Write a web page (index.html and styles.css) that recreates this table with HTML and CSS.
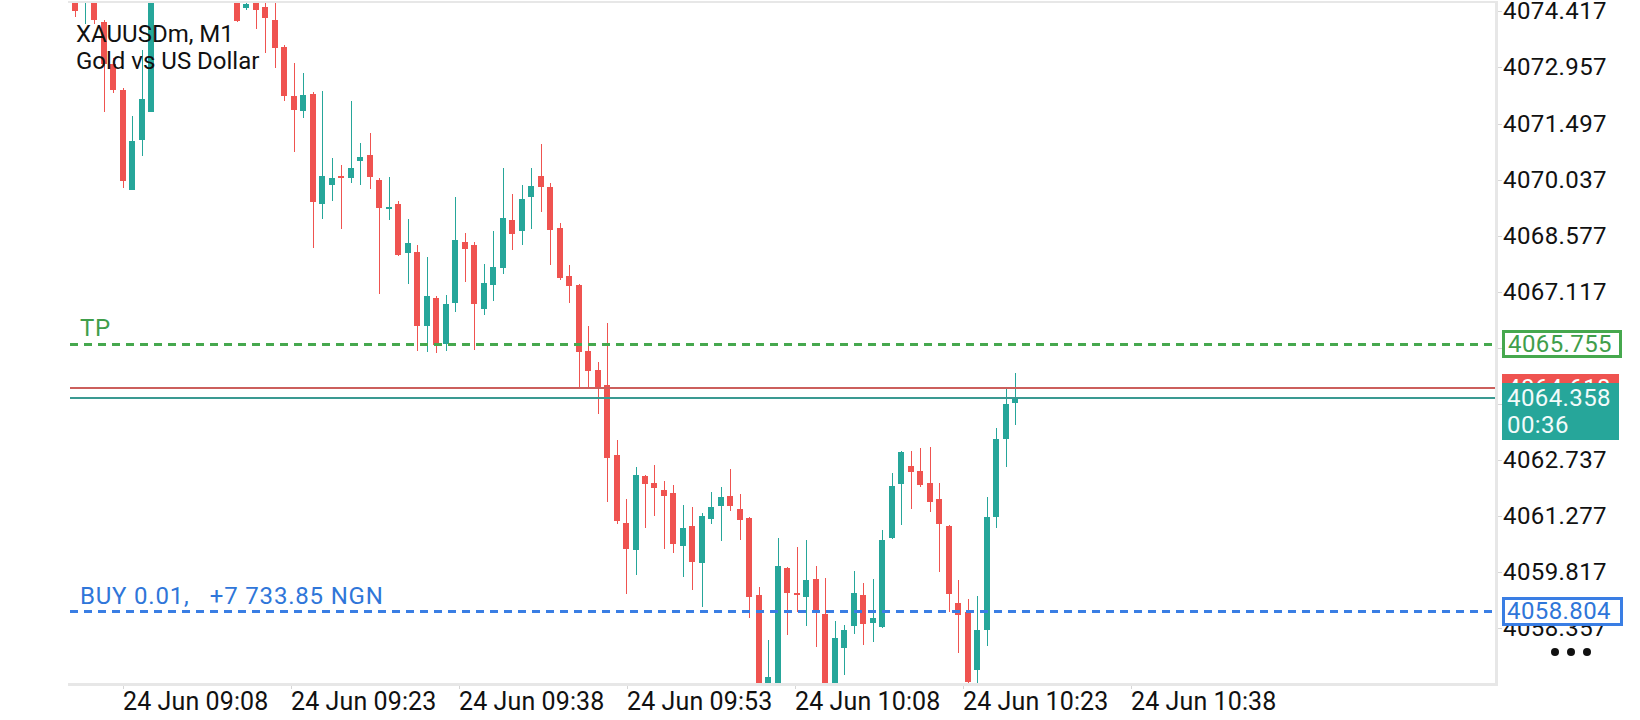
FILE: index.html
```html
<!DOCTYPE html>
<html lang="en">
<head>
<meta charset="utf-8">
<title>XAUUSDm, M1</title>
<link rel="stylesheet" href="styles.css">
</head>
<body>
<div class="terminal">
  <div class="gutter"></div>

  <div class="plot">
    <svg class="chart" viewBox="68 3 1427 680" width="1427" height="680" xmlns="http://www.w3.org/2000/svg">
      <g class="candles">
        <rect class="d" x="75" y="-10" width="1" height="27"/><rect class="d" x="72" y="-10" width="6" height="21"/>
        <rect class="u" x="85" y="-30" width="1" height="54"/><rect class="u" x="82" y="-30" width="6" height="25"/>
        <rect class="d" x="94" y="-10" width="1" height="34"/><rect class="d" x="91" y="-10" width="6" height="30"/>
        <rect class="d" x="104" y="20" width="1" height="92"/><rect class="d" x="101" y="22" width="6" height="42"/>
        <rect class="d" x="113" y="58" width="1" height="35"/><rect class="d" x="110" y="64" width="6" height="26"/>
        <rect class="d" x="123" y="88" width="1" height="100"/><rect class="d" x="120" y="90" width="6" height="91"/>
        <rect class="u" x="132" y="116" width="1" height="74"/><rect class="u" x="129" y="141" width="6" height="49"/>
        <rect class="u" x="142" y="50" width="1" height="106"/><rect class="u" x="139" y="99" width="6" height="41"/>
        <rect class="u" x="151" y="-20" width="1" height="132"/><rect class="u" x="148" y="-20" width="6" height="132"/>
        <rect class="d" x="237" y="-10" width="1" height="32"/><rect class="d" x="234" y="-10" width="6" height="31"/>
        <rect class="u" x="246" y="-5" width="1" height="15"/><rect class="u" x="243" y="4" width="6" height="4"/>
        <rect class="d" x="256" y="-10" width="1" height="39"/><rect class="d" x="253" y="-10" width="6" height="20"/>
        <rect class="d" x="265" y="-5" width="1" height="58"/><rect class="d" x="262" y="7" width="6" height="11"/>
        <rect class="d" x="275" y="2" width="1" height="66"/><rect class="d" x="272" y="20" width="6" height="28"/>
        <rect class="d" x="284" y="45" width="1" height="56"/><rect class="d" x="281" y="47" width="6" height="49"/>
        <rect class="d" x="294" y="63" width="1" height="89"/><rect class="d" x="291" y="96" width="6" height="14"/>
        <rect class="u" x="303" y="73" width="1" height="45"/><rect class="u" x="300" y="95" width="6" height="16"/>
        <rect class="d" x="313" y="92" width="1" height="156"/><rect class="d" x="310" y="94" width="6" height="108"/>
        <rect class="u" x="322" y="91" width="1" height="128"/><rect class="u" x="319" y="176" width="6" height="28"/>
        <rect class="u" x="332" y="158" width="1" height="43"/><rect class="u" x="329" y="178" width="6" height="7"/>
        <rect class="d" x="341" y="165" width="1" height="64"/><rect class="d" x="338" y="176" width="6" height="2"/>
        <rect class="u" x="351" y="101" width="1" height="82"/><rect class="u" x="348" y="168" width="6" height="10"/>
        <rect class="u" x="360" y="143" width="1" height="42"/><rect class="u" x="357" y="157" width="6" height="4"/>
        <rect class="d" x="370" y="133" width="1" height="56"/><rect class="d" x="367" y="155" width="6" height="22"/>
        <rect class="d" x="379" y="178" width="1" height="116"/><rect class="d" x="376" y="180" width="6" height="28"/>
        <rect class="u" x="389" y="177" width="1" height="43"/><rect class="u" x="386" y="207" width="6" height="2"/>
        <rect class="d" x="398" y="201" width="1" height="55"/><rect class="d" x="395" y="204" width="6" height="51"/>
        <rect class="u" x="408" y="219" width="1" height="65"/><rect class="u" x="405" y="243" width="6" height="10"/>
        <rect class="d" x="417" y="245" width="1" height="106"/><rect class="d" x="414" y="252" width="6" height="74"/>
        <rect class="u" x="427" y="257" width="1" height="95"/><rect class="u" x="424" y="296" width="6" height="30"/>
        <rect class="d" x="436" y="296" width="1" height="57"/><rect class="d" x="433" y="298" width="6" height="47"/>
        <rect class="u" x="446" y="295" width="1" height="56"/><rect class="u" x="443" y="304" width="6" height="40"/>
        <rect class="u" x="455" y="197" width="1" height="115"/><rect class="u" x="452" y="240" width="6" height="63"/>
        <rect class="d" x="465" y="233" width="1" height="49"/><rect class="d" x="462" y="242" width="6" height="7"/>
        <rect class="d" x="474" y="242" width="1" height="108"/><rect class="d" x="471" y="245" width="6" height="59"/>
        <rect class="u" x="484" y="264" width="1" height="51"/><rect class="u" x="481" y="283" width="6" height="26"/>
        <rect class="u" x="493" y="231" width="1" height="70"/><rect class="u" x="490" y="267" width="6" height="18"/>
        <rect class="u" x="503" y="168" width="1" height="106"/><rect class="u" x="500" y="218" width="6" height="50"/>
        <rect class="d" x="512" y="194" width="1" height="56"/><rect class="d" x="509" y="220" width="6" height="14"/>
        <rect class="u" x="522" y="185" width="1" height="60"/><rect class="u" x="519" y="199" width="6" height="32"/>
        <rect class="u" x="531" y="168" width="1" height="61"/><rect class="u" x="528" y="186" width="6" height="11"/>
        <rect class="d" x="541" y="144" width="1" height="68"/><rect class="d" x="538" y="176" width="6" height="11"/>
        <rect class="d" x="550" y="183" width="1" height="82"/><rect class="d" x="547" y="187" width="6" height="43"/>
        <rect class="d" x="560" y="223" width="1" height="57"/><rect class="d" x="557" y="228" width="6" height="50"/>
        <rect class="d" x="569" y="265" width="1" height="38"/><rect class="d" x="566" y="276" width="6" height="10"/>
        <rect class="d" x="579" y="284" width="1" height="104"/><rect class="d" x="576" y="285" width="6" height="67"/>
        <rect class="d" x="588" y="326" width="1" height="61"/><rect class="d" x="585" y="351" width="6" height="20"/>
        <rect class="d" x="598" y="362" width="1" height="52"/><rect class="d" x="595" y="370" width="6" height="18"/>
        <rect class="d" x="607" y="323" width="1" height="179"/><rect class="d" x="604" y="385" width="6" height="73"/>
        <rect class="d" x="617" y="440" width="1" height="84"/><rect class="d" x="614" y="455" width="6" height="66"/>
        <rect class="d" x="626" y="499" width="1" height="95"/><rect class="d" x="623" y="523" width="6" height="26"/>
        <rect class="u" x="636" y="467" width="1" height="108"/><rect class="u" x="633" y="475" width="6" height="75"/>
        <rect class="d" x="645" y="475" width="1" height="53"/><rect class="d" x="642" y="476" width="6" height="8"/>
        <rect class="d" x="654" y="465" width="1" height="51"/><rect class="d" x="651" y="483" width="6" height="5"/>
        <rect class="d" x="664" y="481" width="1" height="68"/><rect class="d" x="661" y="490" width="6" height="6"/>
        <rect class="d" x="673" y="485" width="1" height="68"/><rect class="d" x="670" y="493" width="6" height="51"/>
        <rect class="u" x="683" y="505" width="1" height="72"/><rect class="u" x="680" y="528" width="6" height="18"/>
        <rect class="d" x="692" y="507" width="1" height="83"/><rect class="d" x="689" y="526" width="6" height="36"/>
        <rect class="u" x="702" y="513" width="1" height="94"/><rect class="u" x="699" y="516" width="6" height="47"/>
        <rect class="u" x="711" y="492" width="1" height="32"/><rect class="u" x="708" y="507" width="6" height="12"/>
        <rect class="u" x="721" y="487" width="1" height="54"/><rect class="u" x="718" y="497" width="6" height="9"/>
        <rect class="d" x="730" y="469" width="1" height="42"/><rect class="d" x="727" y="496" width="6" height="10"/>
        <rect class="d" x="740" y="494" width="1" height="46"/><rect class="d" x="737" y="509" width="6" height="11"/>
        <rect class="d" x="749" y="517" width="1" height="101"/><rect class="d" x="746" y="518" width="6" height="79"/>
        <rect class="d" x="759" y="587" width="1" height="113"/><rect class="d" x="756" y="595" width="6" height="105"/>
        <rect class="u" x="768" y="640" width="1" height="60"/><rect class="u" x="765" y="677" width="6" height="23"/>
        <rect class="u" x="778" y="538" width="1" height="162"/><rect class="u" x="775" y="566" width="6" height="134"/>
        <rect class="d" x="787" y="567" width="1" height="68"/><rect class="d" x="784" y="568" width="6" height="25"/>
        <rect class="d" x="797" y="547" width="1" height="65"/><rect class="d" x="794" y="593" width="6" height="2"/>
        <rect class="u" x="806" y="540" width="1" height="86"/><rect class="u" x="803" y="580" width="6" height="17"/>
        <rect class="d" x="816" y="566" width="1" height="81"/><rect class="d" x="813" y="579" width="6" height="33"/>
        <rect class="d" x="825" y="578" width="1" height="122"/><rect class="d" x="822" y="614" width="6" height="86"/>
        <rect class="u" x="835" y="621" width="1" height="79"/><rect class="u" x="832" y="638" width="6" height="62"/>
        <rect class="u" x="844" y="625" width="1" height="50"/><rect class="u" x="841" y="630" width="6" height="18"/>
        <rect class="u" x="854" y="571" width="1" height="63"/><rect class="u" x="851" y="593" width="6" height="33"/>
        <rect class="d" x="863" y="583" width="1" height="62"/><rect class="d" x="860" y="595" width="6" height="29"/>
        <rect class="u" x="873" y="579" width="1" height="63"/><rect class="u" x="870" y="618" width="6" height="5"/>
        <rect class="u" x="882" y="530" width="1" height="98"/><rect class="u" x="879" y="540" width="6" height="87"/>
        <rect class="u" x="892" y="473" width="1" height="66"/><rect class="u" x="889" y="486" width="6" height="52"/>
        <rect class="u" x="901" y="451" width="1" height="74"/><rect class="u" x="898" y="452" width="6" height="32"/>
        <rect class="d" x="911" y="451" width="1" height="58"/><rect class="d" x="908" y="466" width="6" height="6"/>
        <rect class="d" x="920" y="448" width="1" height="39"/><rect class="d" x="917" y="471" width="6" height="14"/>
        <rect class="d" x="930" y="447" width="1" height="65"/><rect class="d" x="927" y="483" width="6" height="19"/>
        <rect class="d" x="939" y="483" width="1" height="89"/><rect class="d" x="936" y="499" width="6" height="25"/>
        <rect class="d" x="949" y="525" width="1" height="87"/><rect class="d" x="946" y="526" width="6" height="68"/>
        <rect class="d" x="958" y="580" width="1" height="73"/><rect class="d" x="955" y="603" width="6" height="12"/>
        <rect class="d" x="968" y="599" width="1" height="91"/><rect class="d" x="965" y="612" width="6" height="70"/>
        <rect class="u" x="977" y="596" width="1" height="94"/><rect class="u" x="974" y="630" width="6" height="40"/>
        <rect class="u" x="987" y="497" width="1" height="149"/><rect class="u" x="984" y="517" width="6" height="113"/>
        <rect class="u" x="996" y="428" width="1" height="100"/><rect class="u" x="993" y="439" width="6" height="78"/>
        <rect class="u" x="1006" y="388" width="1" height="79"/><rect class="u" x="1003" y="404" width="6" height="35"/>
        <rect class="u" x="1015" y="373" width="1" height="52"/><rect class="u" x="1012" y="397" width="6" height="6"/>
      </g>
      <g class="levels">
        <line class="lvl-tp" x1="70" y1="344.5" x2="1495" y2="344.5"/>
        <line class="lvl-ask" x1="70" y1="388" x2="1495" y2="388"/>
        <line class="lvl-bid" x1="70" y1="398" x2="1495" y2="398"/>
        <line class="lvl-buy" x1="70" y1="611.5" x2="1495" y2="611.5"/>
      </g>
    </svg>

    <div class="symbol">
      <div>XAUUSDm, M1</div>
      <div>Gold vs US Dollar</div>
    </div>
    <div class="line-label tp-label">TP</div>
    <div class="line-label buy-label">BUY 0.01,   +7 733.85 NGN</div>
  </div>

  <div class="price-axis">
    <div class="price-scale">
      <div class="price">4074.417</div>
      <div class="price">4072.957</div>
      <div class="price">4071.497</div>
      <div class="price">4070.037</div>
      <div class="price">4068.577</div>
      <div class="price">4067.117</div>
      <div class="price">4065.657</div>
      <div class="price">4064.197</div>
      <div class="price">4062.737</div>
      <div class="price">4061.277</div>
      <div class="price">4059.817</div>
      <div class="price">4058.357</div>
    </div>
    <div class="tag tag-tp">4065.755</div>
    <div class="tag tag-ask">4064.618</div>
    <div class="tag tag-bid">4064.358<br>00:36</div>
    <div class="tag tag-buy">4058.804</div>
    <div class="more"><span></span><span></span><span></span></div>
  </div>

  <div class="corner"></div>
  <div class="time-axis">
    <div class="time">24 Jun 09:08</div>
    <div class="time">24 Jun 09:23</div>
    <div class="time">24 Jun 09:38</div>
    <div class="time">24 Jun 09:53</div>
    <div class="time">24 Jun 10:08</div>
    <div class="time">24 Jun 10:23</div>
    <div class="time">24 Jun 10:38</div>
  </div>
</div>
</body>
</html>
```

FILE: styles.css
```css
html, body {
  margin: 0;
  padding: 0;
}

body {
  width: 1640px;
  height: 720px;
  overflow: hidden;
  background: #ffffff;
  font-family: Roboto, "Liberation Sans", Arial, sans-serif;
  color: #111111;
}

.terminal {
  display: grid;
  grid-template-columns: 68px 1430px 142px;
  grid-template-rows: 686px 34px;
  width: 1640px;
  height: 720px;
}

.gutter {
  grid-column: 1;
  grid-row: 1;
}

.corner {
  grid-column: 1;
  grid-row: 2;
}

/* ---------- plot ---------- */
.plot {
  grid-column: 2;
  grid-row: 1;
  position: relative;
  margin-top: 1px;
  border-top: 2px solid #e7e7e7;
  border-right: 3px solid #e7e7e7;
  border-bottom: 3px solid #e7e7e7;
}

.chart {
  display: block;
  width: 1427px;
  height: 680px;
  overflow: hidden;
}

.candles rect {
  shape-rendering: crispEdges;
}

.candles .u {
  fill: #26a69a;
}

.candles .d {
  fill: #ef5350;
}

.levels line {
  shape-rendering: crispEdges;
}

.lvl-tp {
  stroke: #46a84e;
  stroke-width: 3;
  stroke-dasharray: 8 6;
}

.lvl-buy {
  stroke: #3a7ee4;
  stroke-width: 3;
  stroke-dasharray: 8 6;
}

.lvl-ask {
  stroke: #cc5f5c;
  stroke-width: 2;
}

.lvl-bid {
  stroke: #3a9a92;
  stroke-width: 2;
}

.symbol {
  position: absolute;
  left: 8px;
  top: 18px;
  font-size: 24px;
  line-height: 27px;
  color: #111111;
  white-space: nowrap;
}

.line-label {
  position: absolute;
  left: 12px;
  font-size: 24px;
  line-height: 24px;
  letter-spacing: 0.8px;
  white-space: pre;
}

.tp-label {
  top: 313px;
  color: #3f9e4b;
}

.buy-label {
  top: 581px;
  color: #2f76d9;
}

/* ---------- price axis ---------- */
.price-axis {
  grid-column: 3;
  grid-row: 1 / span 2;
  position: relative;
}

.price-scale {
  display: grid;
  grid-auto-rows: 56.1px;
  margin-top: -16.7px;
}

.price {
  position: relative;
  padding-left: 5px;
  font-size: 24px;
  line-height: 56.1px;
  letter-spacing: 0.4px;
  color: #111111;
  white-space: nowrap;
}

.price::before {
  content: "";
  position: absolute;
  left: 0;
  top: 28px;
  width: 4px;
  height: 1px;
  background: #d6d6d6;
}

.tag {
  position: absolute;
  left: 4px;
  box-sizing: border-box;
  padding-left: 5px;
  font-size: 24px;
  letter-spacing: 0.4px;
  white-space: nowrap;
  overflow: hidden;
}

.tag-tp {
  top: 330px;
  width: 120px;
  height: 28px;
  padding-left: 3px;
  border: 3px solid #46a84e;
  background: #ffffff;
  color: #3f9e4b;
  line-height: 22px;
}

.tag-ask {
  top: 374px;
  width: 117px;
  height: 28px;
  background: #ef5350;
  color: #ffffff;
  line-height: 28px;
}

.tag-bid {
  top: 383px;
  width: 117px;
  height: 57px;
  padding-top: 1.5px;
  background: #26a69a;
  color: #f2fbfa;
  line-height: 27px;
}

.tag-buy {
  top: 597px;
  width: 121px;
  height: 29px;
  padding-left: 2px;
  border: 3px solid #3a7ee4;
  background: #ffffff;
  color: #2f76d9;
  line-height: 23px;
}

.more {
  position: absolute;
  left: 53px;
  top: 648px;
  display: flex;
  gap: 8px;
}

.more span {
  width: 8px;
  height: 8px;
  border-radius: 50%;
  background: #111111;
}

/* ---------- time axis ---------- */
.time-axis {
  grid-column: 2;
  grid-row: 2;
  display: flex;
  padding-left: 55px;
  padding-top: 4px;
  font-size: 25px;
  line-height: 24px;
  letter-spacing: 0.1px;
  color: #111111;
}

.time {
  flex: none;
  width: 168px;
  position: relative;
  white-space: nowrap;
}

.time::before {
  content: "";
  position: absolute;
  left: 0;
  top: -4px;
  width: 1px;
  height: 3px;
  background: #d6d6d6;
}
```
